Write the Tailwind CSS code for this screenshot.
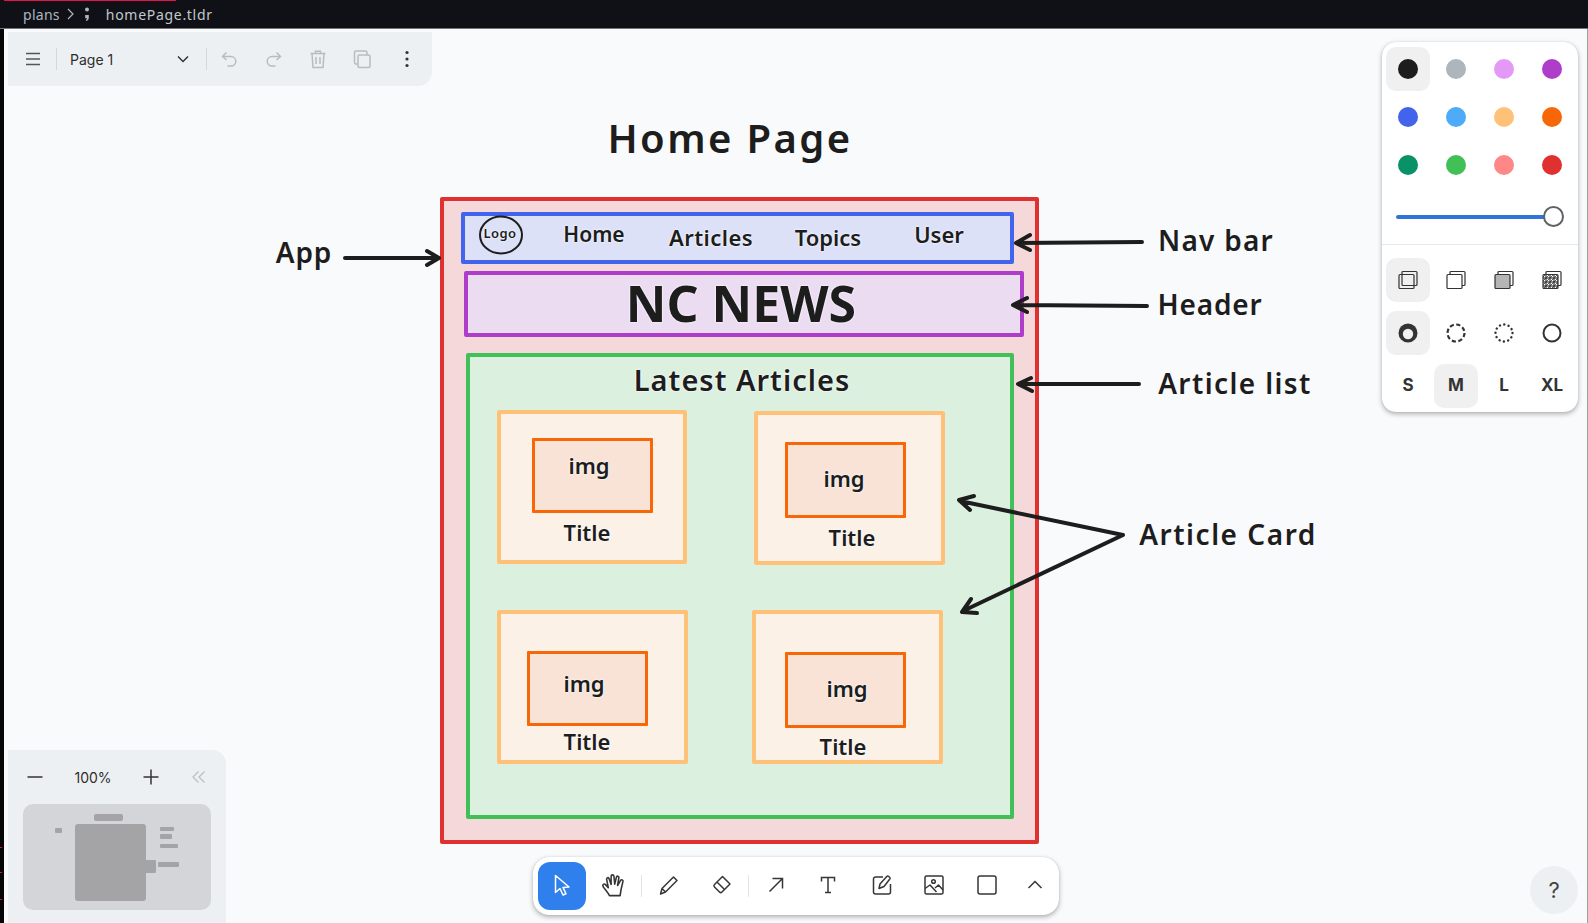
<!DOCTYPE html>
<html>
<head>
<meta charset="utf-8">
<title>homePage.tldr</title>
<script src="https://cdn.jsdelivr.net/npm/@tailwindcss/browser@4"></script>
</head>
<body class="overflow-hidden bg-[#f9fafc]">
<div class="relative flex flex-col w-[1588px] h-[923px] overflow-hidden font-['Inter',sans-serif] text-[#1d1d1d]">

    <!-- editor breadcrumb -->
    <div class="relative flex items-center h-[29px] pl-[23px] bg-[#0f1116] border-b border-[#73767b] font-['Noto_Sans',sans-serif] text-[14px] text-[#c3c8ce] tracking-[0.02em]">
        <div class="absolute left-[4px] top-0 w-[172px] h-[1px] bg-[#e5124c]"></div>
        <span class="text-[#aeb6bf]">plans</span>
        <svg class="w-[10px] h-[12px] ml-[6px]" viewBox="0 0 10 12" fill="none" stroke="#aeb6bf" stroke-width="1.2"><path d="M2 1l5 5-5 5"/></svg>
        <svg class="w-[6px] h-[16px] ml-[8px]" viewBox="0 0 6 16" fill="#aeb6bf"><circle cx="3" cy="3.5" r="2"/><path d="M1.2 9h3.600v2.400c0 1.600-.8 3-2.400 3.600l-.6-1c.8-.4 1.200-1 1.200-1.800H1.200z"/></svg>
        <span class="ml-[16px] tracking-[0.05em]">homePage.tldr</span>
    </div>

    <!-- window edges -->
    <div class="flex-1 flex">
        <div class="relative w-[4px] bg-[#050608]">
            <div class="absolute left-0 top-[818px] w-[2px] h-[1px] bg-[#e5124c]"></div>
            <div class="absolute left-0 top-[843px] w-[2px] h-[1px] bg-[#e5124c]"></div>
            <div class="absolute left-0 top-[870px] w-[2px] h-[1px] bg-[#e5124c]"></div>
        </div>
        <div class="flex-1 bg-[#f9fafc]"></div>
        <div class="w-[1px] bg-[#9a9da1]"></div>
    </div>

    <!-- boxes on the canvas -->
    <div class="absolute left-[440px] top-[197px] w-[599px] h-[647px] bg-[#f5d8d9] border-4 border-[#e03131] rounded-[2px]"></div>
    <div class="absolute left-[461px] top-[212px] w-[553px] h-[52px] bg-[#dce1f8] border-4 border-[#4263eb] rounded-[2px]"></div>
    <div class="absolute left-[464px] top-[271px] w-[560px] h-[66px] bg-[#ecdcf2] border-4 border-[#ae3ec9] rounded-[2px]"></div>
    <div class="absolute left-[466px] top-[353px] w-[548px] h-[466px] bg-[#dcf0e0] border-4 border-[#40c057] rounded-[2px]"></div>

    <div class="absolute left-[497px] top-[410px] w-[190px] h-[154px] bg-[#fbf1e6] border-4 border-[#ffc078] rounded-[2px]"></div>
    <div class="absolute left-[754px] top-[411px] w-[191px] h-[154px] bg-[#fbf1e6] border-4 border-[#ffc078] rounded-[2px]"></div>
    <div class="absolute left-[497px] top-[610px] w-[191px] h-[154px] bg-[#fbf1e6] border-4 border-[#ffc078] rounded-[2px]"></div>
    <div class="absolute left-[752px] top-[610px] w-[191px] h-[154px] bg-[#fbf1e6] border-4 border-[#ffc078] rounded-[2px]"></div>

    <div class="absolute left-[532px] top-[438px] w-[121px] h-[75px] bg-[#f9e3d6] border-[3px] border-[#f76707] rounded-[1px]"></div>
    <div class="absolute left-[785px] top-[442px] w-[121px] h-[76px] bg-[#f9e3d6] border-[3px] border-[#f76707] rounded-[1px]"></div>
    <div class="absolute left-[527px] top-[651px] w-[121px] h-[75px] bg-[#f9e3d6] border-[3px] border-[#f76707] rounded-[1px]"></div>
    <div class="absolute left-[785px] top-[652px] w-[121px] h-[76px] bg-[#f9e3d6] border-[3px] border-[#f76707] rounded-[1px]"></div>

    <!-- arrows and the logo circle -->
    <svg class="absolute left-0 top-0 w-[1588px] h-[923px] pointer-events-none" viewBox="0 0 1588 923" fill="none" stroke="#1d1d1d" stroke-width="4" stroke-linecap="round" stroke-linejoin="round">
        <path d="M345 258H438M427 251l12 7-12 7"/>
        <path d="M1142 242L1017 243M1030 235l-14 8 14 7"/>
        <path d="M1147 306L1014 305M1027 298l-14 7 14 7"/>
        <path d="M1139 384H1019M1031 378l-13 6 14 7"/>
        <path d="M960 501L1123 535L963 611M974 496l-15 4 11 10M971 599l-9 13 15 1"/>
        <ellipse cx="501" cy="235" rx="21" ry="18.500" stroke-width="2"/>
    </svg>

    <!-- canvas text -->
    <div class="font-['Noto_Sans',sans-serif] font-semibold [text-shadow:0_0_2px_#f9fafc,0_0_2px_#f9fafc]">
        <div class="absolute left-[580px] top-[113px] w-[300px] h-[50px] flex items-center justify-center text-[40px] tracking-[0.06em] whitespace-nowrap">Home Page</div>
        <div class="absolute left-[254px] top-[232px] w-[100px] h-[40px] flex items-center justify-center text-[28px] tracking-[0.03em] whitespace-nowrap">App</div>
        <div class="absolute left-[1116px] top-[220px] w-[200px] h-[40px] flex items-center justify-center text-[28px] tracking-[0.045em] whitespace-nowrap">Nav bar</div>
        <div class="absolute left-[1110px] top-[284px] w-[200px] h-[40px] flex items-center justify-center text-[28px] tracking-[0.03em] whitespace-nowrap">Header</div>
        <div class="absolute left-[1135px] top-[363px] w-[200px] h-[40px] flex items-center justify-center text-[28px] tracking-[0.05em] whitespace-nowrap">Article list</div>
        <div class="absolute left-[1128px] top-[514px] w-[200px] h-[40px] flex items-center justify-center text-[28px] tracking-[0.055em] whitespace-nowrap">Article Card</div>

        <div class="absolute left-[470px] top-[224px] w-[60px] h-[20px] flex items-center justify-center text-[13px] tracking-[0.03em]">Logo</div>
        <div class="absolute left-[544px] top-[220px] w-[100px] h-[30px] flex items-center justify-center text-[21px]">Home</div>
        <div class="absolute left-[661px] top-[222px] w-[100px] h-[30px] flex items-center justify-center text-[22px] tracking-[0.02em]">Articles</div>
        <div class="absolute left-[778px] top-[222px] w-[100px] h-[30px] flex items-center justify-center text-[22px]">Topics</div>
        <div class="absolute left-[889px] top-[219px] w-[100px] h-[30px] flex items-center justify-center text-[22px]">User</div>
        <div class="absolute left-[591px] top-[268px] w-[300px] h-[70px] flex items-center justify-center text-[50px] font-bold whitespace-nowrap">NC NEWS</div>
        <div class="absolute left-[592px] top-[360px] w-[300px] h-[40px] flex items-center justify-center text-[29px] tracking-[0.035em] whitespace-nowrap">Latest Articles</div>

        <div class="absolute left-[549px] top-[450px] w-[80px] h-[30px] flex items-center justify-center text-[22px]">img</div>
        <div class="absolute left-[547px] top-[517px] w-[80px] h-[30px] flex items-center justify-center text-[22px]">Title</div>
        <div class="absolute left-[804px] top-[463px] w-[80px] h-[30px] flex items-center justify-center text-[22px]">img</div>
        <div class="absolute left-[812px] top-[522px] w-[80px] h-[30px] flex items-center justify-center text-[22px]">Title</div>
        <div class="absolute left-[544px] top-[668px] w-[80px] h-[30px] flex items-center justify-center text-[22px]">img</div>
        <div class="absolute left-[547px] top-[726px] w-[80px] h-[30px] flex items-center justify-center text-[22px]">Title</div>
        <div class="absolute left-[807px] top-[673px] w-[80px] h-[30px] flex items-center justify-center text-[22px]">img</div>
        <div class="absolute left-[803px] top-[731px] w-[80px] h-[30px] flex items-center justify-center text-[22px]">Title</div>
    </div>

    <!-- page menu panel -->
    <div class="absolute left-[8px] top-[32px] w-[424px] h-[54px] flex items-center bg-[#edf0f2] rounded-br-[14px]">
        <div class="w-12 flex justify-center pl-[2px] text-[#555]">
            <svg class="w-6 h-6" viewBox="0 0 24 24" fill="none" stroke="currentColor" stroke-width="1.500"><path d="M5 6.500h14M5 12h14M5 17.500h14"/></svg>
        </div>
        <div class="w-[1px] h-[22px] bg-[#d5d8db]"></div>
        <span class="ml-[13px] w-[105px] text-[14px] text-[#2d2d2d]">Page 1</span>
        <svg class="w-4 h-4" viewBox="0 0 16 16" fill="none" stroke="#333" stroke-width="1.500"><path d="M3 5.500l5 5 5-5"/></svg>
        <div class="ml-[15px] w-[1px] h-[22px] bg-[#d5d8db]"></div>
        <div class="flex text-[#b9bcbf]">
            <div class="w-[44.4px] flex justify-center">
                <svg class="w-6 h-6" viewBox="0 0 24 24" fill="none" stroke="currentColor" stroke-width="1.500"><path d="M9.500 5.500L5.500 9.500l4 3.500M5.500 9.500H14a4.800 4.800 0 0 1 0 9.600h-3.500"/></svg>
            </div>
            <div class="w-[44.4px] flex justify-center">
                <svg class="w-6 h-6" viewBox="0 0 24 24" fill="none" stroke="currentColor" stroke-width="1.500"><path d="M14.500 5.500l4 4-4 3.500M18.500 9.500H10a4.800 4.800 0 0 0 0 9.600h3.500"/></svg>
            </div>
            <div class="w-[44.4px] flex justify-center">
                <svg class="w-6 h-6" viewBox="0 0 24 24" fill="none" stroke="currentColor" stroke-width="1.500"><path d="M4.500 6.500h15M9.500 6.500V4.200h5v2.300M6 6.500l1 14h10l1-14M10 10v7M14 10v7"/></svg>
            </div>
            <div class="w-[44.4px] flex justify-center">
                <svg class="w-6 h-6" viewBox="0 0 24 24" fill="none" stroke="currentColor" stroke-width="1.500"><path d="M8 17H6a1.500 1.500 0 0 1-1.500-1.500V5.500A1.500 1.500 0 0 1 6 4h9.500A1.500 1.500 0 0 1 17 5.500V8"/><rect x="8" y="8" width="12" height="12.500" rx="1.500"/></svg>
            </div>
            <div class="w-[44.4px] flex justify-center text-[#333]">
                <svg class="w-6 h-6" viewBox="0 0 24 24" fill="currentColor"><circle cx="12" cy="5.500" r="1.600"/><circle cx="12" cy="12" r="1.600"/><circle cx="12" cy="18.500" r="1.600"/></svg>
            </div>
        </div>
    </div>

    <!-- style panel -->
    <div class="absolute left-[1382px] top-[42px] w-[196px] h-[370px] flex flex-col bg-white rounded-[14px] shadow-[0_2px_5px_rgba(0,0,0,0.3),0_0_1px_rgba(0,0,0,0.2)]">
        <div class="grid grid-cols-[repeat(4,44px)] gap-[4px] px-[4px] pt-[5px]">
            <div class="h-11 flex items-center justify-center rounded-[10px] bg-[#f0f0f0]"><div class="w-5 h-5 rounded-full bg-[#1d1d1d]"></div></div>
            <div class="h-11 flex items-center justify-center"><div class="w-5 h-5 rounded-full bg-[#adb5bd]"></div></div>
            <div class="h-11 flex items-center justify-center"><div class="w-5 h-5 rounded-full bg-[#e599f7]"></div></div>
            <div class="h-11 flex items-center justify-center"><div class="w-5 h-5 rounded-full bg-[#ae3ec9]"></div></div>
            <div class="h-11 flex items-center justify-center"><div class="w-5 h-5 rounded-full bg-[#4263eb]"></div></div>
            <div class="h-11 flex items-center justify-center"><div class="w-5 h-5 rounded-full bg-[#4dabf7]"></div></div>
            <div class="h-11 flex items-center justify-center"><div class="w-5 h-5 rounded-full bg-[#ffc078]"></div></div>
            <div class="h-11 flex items-center justify-center"><div class="w-5 h-5 rounded-full bg-[#f76707]"></div></div>
            <div class="h-11 flex items-center justify-center"><div class="w-5 h-5 rounded-full bg-[#099268]"></div></div>
            <div class="h-11 flex items-center justify-center"><div class="w-5 h-5 rounded-full bg-[#40c057]"></div></div>
            <div class="h-11 flex items-center justify-center"><div class="w-5 h-5 rounded-full bg-[#ff8787]"></div></div>
            <div class="h-11 flex items-center justify-center"><div class="w-5 h-5 rounded-full bg-[#e03131]"></div></div>
        </div>
        <div class="flex items-center h-[57px] shrink-0 pl-[14px] pt-[2px]">
            <div class="w-[150px] h-[4px] rounded-full bg-[#2f74d9]"></div>
            <div class="w-[21px] h-[21px] -ml-[3px] rounded-full bg-white border-[2.5px] border-[#5f6368]"></div>
        </div>
        <div class="h-[1px] bg-[#e8e8e8]"></div>
        <div class="grid grid-cols-[repeat(4,44px)] gap-x-[4px] gap-y-[9px] px-[4px] pt-[13px] text-[#333]">
            <div class="h-11 flex items-center justify-center rounded-[10px] bg-[#f0f0f0]">
                <svg class="w-5 h-5" viewBox="0 0 20 20" fill="none" stroke="currentColor" stroke-width="1.200"><rect x="1" y="4.500" width="15" height="14" rx="1"/><rect x="4" y="1.500" width="15" height="14" rx="1"/></svg>
            </div>
            <div class="h-11 flex items-center justify-center">
                <svg class="w-5 h-5" viewBox="0 0 20 20" fill="none" stroke="currentColor" stroke-width="1.200"><rect x="4" y="1.500" width="15" height="14" rx="1"/><rect x="1" y="4.500" width="15" height="14" rx="1" fill="#fff"/></svg>
            </div>
            <div class="h-11 flex items-center justify-center">
                <svg class="w-5 h-5" viewBox="0 0 20 20" fill="none" stroke="currentColor" stroke-width="1.200"><rect x="4" y="1.500" width="15" height="14" rx="1"/><rect x="1" y="4.500" width="15" height="14" rx="1" fill="#b5b5b5"/></svg>
            </div>
            <div class="h-11 flex items-center justify-center">
                <svg class="w-5 h-5" viewBox="0 0 20 20" fill="none" stroke="currentColor" stroke-width="1.200"><defs><pattern id="hatch" width="4" height="4" patternUnits="userSpaceOnUse"><rect width="4" height="4" fill="#fff"/><path d="M0 4L4 0" stroke="#333" stroke-width="0.800"/></pattern></defs><rect x="4" y="1.500" width="15" height="14" rx="1"/><rect x="1" y="4.500" width="15" height="14" rx="1" fill="url(#hatch)"/></svg>
            </div>
            <div class="h-11 flex items-center justify-center rounded-[10px] bg-[#f0f0f0]">
                <svg class="w-5 h-5" viewBox="0 0 20 20"><circle cx="10" cy="10" r="9.500" fill="#333"/><circle cx="10" cy="11" r="5.200" fill="#f0f0f0"/></svg>
            </div>
            <div class="h-11 flex items-center justify-center">
                <svg class="w-5 h-5" viewBox="0 0 20 20" fill="none" stroke="currentColor" stroke-width="2.200"><circle cx="10" cy="10" r="8.500" stroke-dasharray="4.200 2.470"/></svg>
            </div>
            <div class="h-11 flex items-center justify-center">
                <svg class="w-5 h-5" viewBox="0 0 20 20" fill="none" stroke="currentColor" stroke-width="2.400" stroke-linecap="round"><circle cx="10" cy="10" r="8.500" stroke-dasharray="0.100 4.350"/></svg>
            </div>
            <div class="h-11 flex items-center justify-center">
                <svg class="w-5 h-5" viewBox="0 0 20 20" fill="none" stroke="currentColor" stroke-width="2"><circle cx="10" cy="10" r="8.500"/></svg>
            </div>
            <div class="h-11 flex items-center justify-center text-[17px] font-bold">S</div>
            <div class="h-11 flex items-center justify-center text-[17px] font-bold rounded-[10px] bg-[#f0f0f0]">M</div>
            <div class="h-11 flex items-center justify-center text-[17px] font-bold">L</div>
            <div class="h-11 flex items-center justify-center text-[17px] font-bold">XL</div>
        </div>
    </div>

    <!-- navigation panel with minimap -->
    <div class="absolute left-[8px] top-[750px] w-[218px] h-[173px] bg-[#edf0f2] rounded-tr-[14px]">
        <div class="flex items-center h-[54px] text-[#333]">
            <div class="w-[54px] flex justify-center">
                <svg class="w-5 h-5" viewBox="0 0 20 20" fill="none" stroke="currentColor" stroke-width="1.500"><path d="M2.500 10h15"/></svg>
            </div>
            <div class="w-[62px] text-center text-[14px] text-[#2d2d2d]">100%</div>
            <div class="w-[54px] flex justify-center">
                <svg class="w-5 h-5" viewBox="0 0 20 20" fill="none" stroke="currentColor" stroke-width="1.500"><path d="M2.500 10h15M10 2.500v15"/></svg>
            </div>
            <div class="w-[41px] flex justify-center text-[#bdc0c3]">
                <svg class="w-4 h-4" viewBox="0 0 16 16" fill="none" stroke="currentColor" stroke-width="1.300"><path d="M7.500 2.500L2 8l5.500 5.500M13.500 2.500L8 8l5.500 5.500"/></svg>
            </div>
        </div>
        <div class="relative ml-[15px] w-[188px] h-[106px] rounded-[10px] bg-[#d3d5d8]">
            <div class="absolute left-[71px] top-[10px] w-[29px] h-[7px] rounded-[2px] bg-[#a4a4a6]"></div>
            <div class="absolute left-[32px] top-[24px] w-[7px] h-[5px] rounded-[1px] bg-[#a4a4a6]"></div>
            <div class="absolute left-[52px] top-[20px] w-[71px] h-[77px] rounded-[3px] bg-[#a4a4a6]"></div>
            <div class="absolute left-[137px] top-[23px] w-[14px] h-[4px] rounded-[1px] bg-[#a4a4a6]"></div>
            <div class="absolute left-[137px] top-[30px] w-[12px] h-[5px] rounded-[1px] bg-[#a4a4a6]"></div>
            <div class="absolute left-[137px] top-[40px] w-[18px] h-[4px] rounded-[1px] bg-[#a4a4a6]"></div>
            <div class="absolute left-[135px] top-[58px] w-[21px] h-[5px] rounded-[1px] bg-[#a4a4a6]"></div>
            <div class="absolute left-[122px] top-[56px] w-[11px] h-[13px] rounded-[1px] bg-[#a4a4a6]"></div>
        </div>
    </div>

    <!-- tool bar -->
    <div class="absolute left-[533px] top-[857px] w-[526px] h-[58px] flex items-center pl-[5px] bg-white rounded-[16px] shadow-[0_2px_5px_rgba(0,0,0,0.3),0_0_1px_rgba(0,0,0,0.2)] text-[#363636]">
        <div class="w-12 h-12 flex items-center justify-center rounded-[12px] bg-[#2f80ed]">
            <svg class="w-6 h-6" viewBox="0 0 24 24" fill="none" stroke="#fff" stroke-width="1.500" stroke-linejoin="round"><path d="M5.500 1.500v17l4.500-4 3 6.500 3-1.300-3-6.300 6-.4z"/></svg>
        </div>
        <div class="ml-[5px] w-12 h-12 flex items-center justify-center pb-[1px]">
            <svg class="w-[27px] h-[27px]" viewBox="0 0 24 24" fill="none" stroke="currentColor" stroke-width="1.400" stroke-linejoin="round" stroke-linecap="round"><path d="M7.500 21C6 18 3 15 1.800 12.800 1 11.300 2.800 10 4 11.200l2.500 2.700L5 6.500C4.700 5 6.700 4.400 7.200 5.900l1.800 5.100V3.800c0-1.700 2.300-1.700 2.500 0l.7 7 1.500-6.200c.4-1.500 2.400-1 2.200.5l-1.200 6.900 2.600-4.400c.8-1.300 2.700-.6 2.200 1C18.500 12.500 17.500 16 17 21z"/></svg>
        </div>
        <div class="ml-[2px] w-[1px] h-[22px] bg-[#e4e4e4]"></div>
        <div class="ml-[3px] w-12 h-12 flex items-center justify-center pb-[2px]">
            <svg class="w-6 h-6" viewBox="0 0 24 24" fill="none" stroke="currentColor" stroke-width="1.500" stroke-linejoin="round"><path d="M3.500 21l1.500-5.500L16.500 4l3.500 3.500L8.500 19zM5 15.500L8.500 19"/></svg>
        </div>
        <div class="ml-[4px] w-12 h-12 flex items-center justify-center pb-[2px]">
            <svg class="w-6 h-6" viewBox="0 0 24 24" fill="none" stroke="currentColor" stroke-width="1.500" stroke-linejoin="round"><path d="M13.500 3.500L21 11l-8 8c-.8.8-1.700.8-2.500 0l-5-5c-.8-.8-.8-1.700 0-2.500zM8 9l7.500 7.500"/></svg>
        </div>
        <div class="ml-[3px] w-[1px] h-[22px] bg-[#e4e4e4]"></div>
        <div class="ml-[3px] w-12 h-12 flex items-center justify-center pb-[2px]">
            <svg class="w-6 h-6" viewBox="0 0 24 24" fill="none" stroke="currentColor" stroke-width="1.500"><path d="M5.500 18.500L18 6M8.500 5.500H18.500V15.500"/></svg>
        </div>
        <div class="ml-[5px] w-12 h-12 flex items-center justify-center pb-[2px]">
            <svg class="w-6 h-6" viewBox="0 0 24 24" fill="none" stroke="currentColor" stroke-width="1.500"><path d="M5.500 8.500V4.500h13v4M12 4.500v15M9 19.500h6"/></svg>
        </div>
        <div class="ml-[6px] w-12 h-12 flex items-center justify-center pb-[2px]">
            <svg class="w-6 h-6" viewBox="0 0 24 24" fill="none" stroke="currentColor" stroke-width="1.500" stroke-linejoin="round"><path d="M13 4H5.500a2 2 0 0 0-2 2v13a2 2 0 0 0 2 2h13a2 2 0 0 0 2-2v-8"/><path d="M9 15.500l1-4.500 7-7.800c.8-.8 3.800 1.500 3 2.600L14 13.500z"/></svg>
        </div>
        <div class="ml-[4px] w-12 h-12 flex items-center justify-center pb-[2px]">
            <svg class="w-6 h-6" viewBox="0 0 24 24" fill="none" stroke="currentColor" stroke-width="1.500" stroke-linejoin="round"><rect x="3" y="3" width="18" height="18" rx="1.500"/><circle cx="11.500" cy="8.500" r="1.800"/><path d="M3 15.500l5-3.500 6.500 7M13 15l3.500-3 4.500 5"/></svg>
        </div>
        <div class="ml-[5px] w-12 h-12 flex items-center justify-center pb-[2px]">
            <svg class="w-6 h-6" viewBox="0 0 24 24" fill="none" stroke="currentColor" stroke-width="1.500"><rect x="3" y="3" width="18" height="18" rx="2"/></svg>
        </div>
        <div class="w-12 h-12 flex items-center justify-center pb-[2px]">
            <svg class="w-6 h-6" viewBox="0 0 24 24" fill="none" stroke="currentColor" stroke-width="1.500"><path d="M5.500 15L12 8.500 18.500 15"/></svg>
        </div>
    </div>

    <!-- help -->
    <div class="absolute left-[1530px] top-[866px] w-12 h-12 flex items-center justify-center rounded-full bg-[#edf0f2] text-[22px] text-[#444]">?</div>
</div>
</body>
</html>
